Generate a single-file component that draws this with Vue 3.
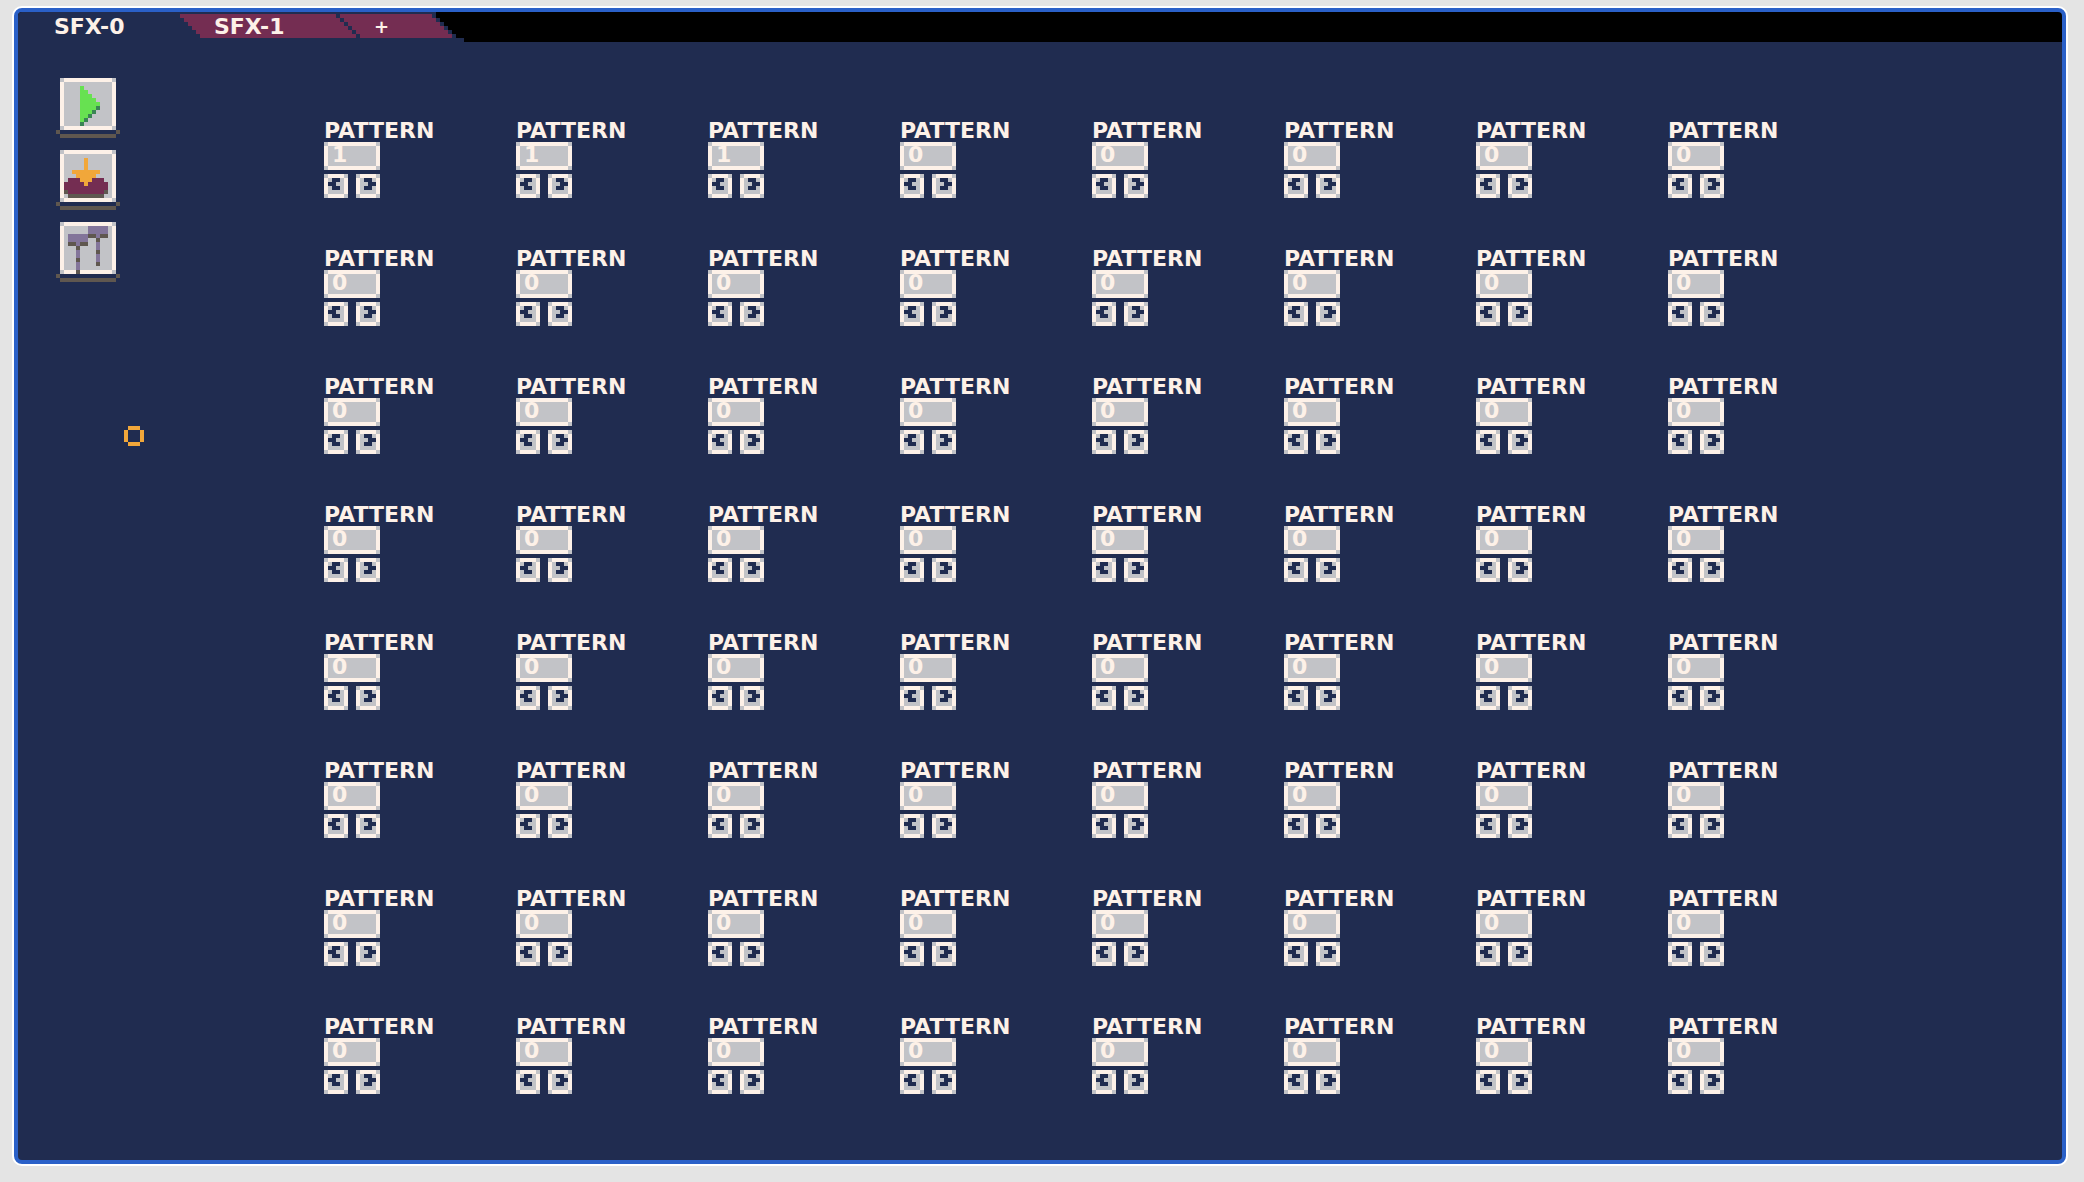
<script setup>
import { reactive, ref } from 'vue'

const tabs = ['SFX-0', 'SFX-1', '+']
const active = ref('SFX-0')

// Each run is [column, row, width, height, colour] on a 16 x 15 grid
const tools = [
  {
    name: 'Play',
    runs: [
      [6, 2, 1, 9, '#67e151'], [7, 3, 1, 7, '#67e151'], [8, 4, 1, 5, '#67e151'],
      [9, 5, 1, 3, '#67e151'], [10, 6, 1, 1, '#67e151'],
      [10, 7, 1, 1, '#3a8454'], [9, 8, 1, 1, '#3a8454'], [8, 9, 1, 1, '#3a8454'],
      [7, 10, 1, 1, '#3a8454'], [6, 11, 1, 1, '#3a8454'],
    ],
  },
  {
    name: 'Save',
    runs: [
      [3, 7, 9, 4, '#742d52'], [2, 8, 11, 2, '#742d52'],
      [2, 10, 1, 1, '#5f574f'], [12, 10, 1, 1, '#5f574f'], [3, 11, 9, 1, '#5f574f'],
      [7, 2, 1, 7, '#f1a73a'], [4, 5, 7, 1, '#f1a73a'], [5, 6, 5, 1, '#f1a73a'],
      [6, 7, 3, 1, '#f1a73a'],
    ],
  },
  {
    name: 'Edit',
    runs: [
      [8, 1, 5, 2, '#83759a'], [8, 3, 5, 1, '#5f574f'], [10, 3, 1, 7, '#83759a'],
      [10, 4, 1, 1, '#5f574f'], [10, 7, 1, 1, '#5f574f'], [10, 10, 1, 1, '#5f574f'],
      [3, 3, 5, 2, '#83759a'], [3, 5, 5, 1, '#5f574f'], [5, 5, 1, 7, '#83759a'],
      [5, 6, 1, 1, '#5f574f'], [5, 9, 1, 1, '#5f574f'], [5, 12, 1, 1, '#5f574f'],
    ],
  },
]

const patterns = reactive(Array.from({ length: 64 }, (_, i) => (i < 3 ? 1 : 0)))

function step(i, by) {
  patterns[i] = Math.max(0, patterns[i] + by)
}
</script>

<template>
  <main class="frame">
    <nav class="tabbar" aria-label="Sound effects">
      <svg class="tabshape" width="446" height="30" viewBox="0 0 446 30" shape-rendering="crispEdges" aria-hidden="true">
        <path fill="#202c50" d="M0 0H418V6H422V10H426V14H430V18H434V22H438V26H446V30H0Z" />
        <path fill="#742d52" d="M162 2H318V6H322V10H326V14H330V18H334V22H338V26H182V22H178V18H174V14H170V10H166V6H162Z" />
        <path fill="#742d52" d="M322 2H414V6H418V10H422V14H426V18H430V22H434V26H342V22H338V18H334V14H330V10H326V6H322Z" />
      </svg>
      <button v-for="tab in tabs" :key="tab" class="tab" :class="{ add: tab === '+' }" type="button" @click="active = tab">{{ tab }}</button>
    </nav>

    <div class="workspace">
      <aside class="tools">
        <button v-for="tool in tools" :key="tool.name" class="tool" type="button" :aria-label="tool.name">
          <svg width="64" height="60" viewBox="0 0 16 15" shape-rendering="crispEdges">
            <path fill="#c2c3c7" d="M1 0H15V13H1Z" />
            <path fill="#fdf1e8" d="M2 0H14V1H2ZM2 12H14V13H2ZM1 1H2V12H1ZM14 1H15V12H14Z" />
            <path fill="#5f574f" d="M0 13H1V14H0ZM15 13H16V14H15ZM1 14H15V15H1Z" />
            <rect v-for="(r, k) in tool.runs" :key="k" :x="r[0]" :y="r[1]" :width="r[2]" :height="r[3]" :fill="r[4]" />
          </svg>
        </button>
      </aside>

      <section class="patterns">
        <div v-for="(value, i) in patterns" :key="i" class="pattern">
          <label class="name" :for="'pattern-' + i">PATTERN</label>
          <input :id="'pattern-' + i" v-model.number="patterns[i]" class="value bevel" type="text">
          <div class="steps">
            <button class="step bevel" type="button" aria-label="Previous" @click="step(i, -1)">
              <svg width="24" height="24" viewBox="0 0 6 6" shape-rendering="crispEdges"><path fill="#202c50" d="M2 1H4V2H3V3H4V4H2V3H1V2H2Z" /></svg>
            </button>
            <button class="step bevel" type="button" aria-label="Next" @click="step(i, 1)">
              <svg width="24" height="24" viewBox="0 0 6 6" shape-rendering="crispEdges"><path fill="#202c50" d="M2 1H4V2H5V3H4V4H2V3H3V2H2Z" /></svg>
            </button>
          </div>
        </div>
      </section>
    </div>

    <svg class="cursor" width="20" height="20" viewBox="0 0 5 5" shape-rendering="crispEdges" aria-hidden="true">
      <path fill="#f1a73a" d="M1 0H4V1H1ZM1 4H4V5H1ZM0 1H1V4H0ZM4 1H5V4H4Z" />
    </svg>
  </main>
</template>

<style>
body {
  background: #e4e4e4;
}
</style>

<style scoped>
.frame {
  position: relative;
  margin: 6px 16px 16px 12px;
  border: 2px solid #fff;
  border-radius: 10px;
  background: #2a60c8;
  padding: 4px;
  color: #fdf1e8;
  font: bold 22px/18px "DejaVu Sans", sans-serif;
}

button,
input {
  margin: 0;
  border: 0;
  padding: 0;
  color: inherit;
  font: inherit;
}

button {
  background: none;
  cursor: pointer;
}

svg {
  display: block;
}

.tabbar {
  position: relative;
  display: flex;
  height: 30px;
  padding-left: 36px;
  border-radius: 4px 4px 0 0;
  background: #000;
  overflow: hidden;
}

.tabshape {
  position: absolute;
  left: 0;
  top: 0;
}

.tab {
  position: relative;
  width: 160px;
  height: 30px;
  text-align: left;
}

.add {
  font-size: 18px;
}

.workspace {
  display: flex;
  padding: 36px 38px 14px;
  border-radius: 0 0 4px 4px;
  background: #202c50;
}

.tools {
  display: flex;
  flex-direction: column;
  gap: 12px;
  width: 268px;
}

.tool {
  width: 64px;
  height: 60px;
}

.patterns {
  display: grid;
  grid-template-columns: repeat(8, 192px);
  grid-auto-rows: 128px;
  padding-top: 44px;
}

.pattern {
  display: flex;
  flex-direction: column;
  align-items: flex-start;
  gap: 4px;
}

.bevel {
  background:
    linear-gradient(#c2c3c7, #c2c3c7) center / calc(100% - 8px) calc(100% - 8px) no-repeat,
    linear-gradient(#fdf1e8, #fdf1e8) center / calc(100% - 8px) 100% no-repeat,
    linear-gradient(#fdf1e8, #fdf1e8) center / 100% calc(100% - 8px) no-repeat,
    #c2c3c7;
}

.name {
  height: 16px;
}

.value {
  box-sizing: border-box;
  width: 56px;
  height: 28px;
  padding: 0 8px 4px;
}

.steps {
  display: flex;
  gap: 8px;
}

.step {
  width: 24px;
  height: 24px;
}

.cursor {
  position: absolute;
  left: 110px;
  top: 418px;
  pointer-events: none;
}
</style>
